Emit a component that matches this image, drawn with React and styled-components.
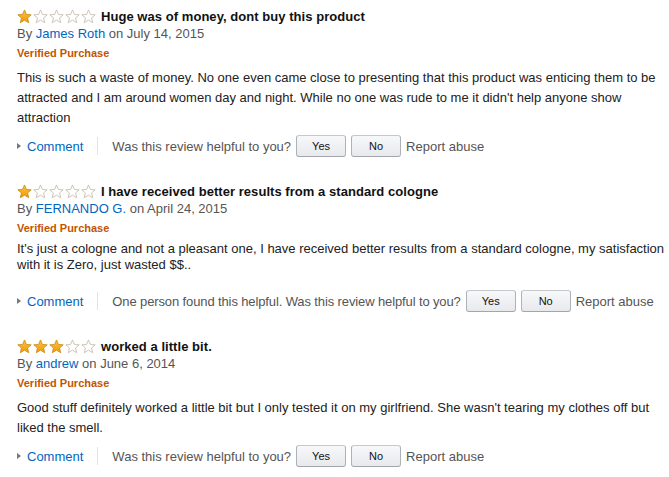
import React from "react";
import styled, { createGlobalStyle } from "styled-components";

const Global = createGlobalStyle`
  html, body { margin: 0; padding: 0; background: #fff; }
  body { font-family: "Liberation Sans", Arial, sans-serif; color: #111; }
`;

const Page = styled.div`
  padding: 0 0 0 17px;
  width: 652px;
`;

const Review = styled.section`
  padding-top: ${(p) => (p.$first ? "7px" : "25px")};
`;

const TitleRow = styled.div`
  display: flex;
  align-items: center;
  gap: 5px;
  height: 18px;
`;

const Stars = styled.span`
  display: inline-flex;
  gap: 1px;
`;

const Title = styled.span`
  font-weight: bold;
  font-size: 13px;
  color: #111;
  letter-spacing: 0.05px;
`;

const Byline = styled.div`
  font-size: 13px;
  line-height: 18px;
  color: #555;
`;

const Link = styled.a`
  color: #0066c0;
  text-decoration: none;
`;

const Verified = styled.div`
  font-size: 11px;
  font-weight: bold;
  line-height: 20px;
  color: #c45500;
`;

const Body = styled.p`
  margin: ${(p) => (p.$tight ? "3px 0 0" : "5px 0 0")};
  font-size: 13px;
  line-height: ${(p) => (p.$tight ? "16px" : "20px")};
  color: #222;
`;

const Actions = styled.div`
  display: flex;
  align-items: center;
  height: 22px;
  margin-top: ${(p) => (p.$tight ? "17px" : "7px")};
  font-size: 13px;
`;

const Arrow = styled.span`
  display: inline-block;
  width: 0;
  height: 0;
  border-top: 3px solid transparent;
  border-bottom: 3px solid transparent;
  border-left: 4px solid #777;
  margin-right: 6px;
`;

const Divider = styled.span`
  width: 1px;
  height: 18px;
  background: #e3e3e3;
  margin: 0 14px 0 14px;
`;

const Helpful = styled.span`
  color: #555;
  margin-right: 5px;
  letter-spacing: ${(p) => (p.$tight ? "-0.12px" : "0")};
`;

const VoteButton = styled.button`
  width: 50px;
  height: 22px;
  margin-right: 5px;
  padding: 0;
  border: 1px solid #adb1b8;
  border-color: #c6c8cc #adb1b8 #a2a6ac;
  border-radius: 3px;
  background: linear-gradient(to bottom, #f7f8fa, #e7e9ec);
  font-family: inherit;
  font-size: 11px;
  color: #111;
`;

const Report = styled.span`
  color: #555;
`;

function Star({ filled }) {
  return (
    <svg width="15" height="15" viewBox="0 0 24 24">
      <defs>
        <linearGradient id="sg" x1="0" y1="0" x2="0" y2="1">
          <stop offset="0" stopColor="#fcc43c" />
          <stop offset="1" stopColor="#f09a0a" />
        </linearGradient>
      </defs>
      <path
        d="M12 1.5l3.1 7.2 7.6.6-5.8 5 1.8 7.6L12 17.8l-6.7 4.1 1.8-7.6-5.8-5 7.6-.6z"
        fill={filled ? "url(#sg)" : "#fff"}
        stroke={filled ? "#c98a10" : "#c2b8a8"}
        strokeWidth="1.3"
        strokeLinejoin="round"
      />
    </svg>
  );
}

const reviews = [
  {
    rating: 1,
    title: "Huge was of money, dont buy this product",
    author: "James Roth",
    date: "July 14, 2015",
    text:
      "This is such a waste of money. No one even came close to presenting that this product was enticing them to be attracted and I am around women day and night. While no one was rude to me it didn't help anyone show attraction",
  },
  {
    rating: 1,
    title: "I have received better results from a standard cologne",
    author: "FERNANDO G.",
    date: "April 24, 2015",
    text:
      "It's just a cologne and not a pleasant one, I have received better results from a standard cologne, my satisfaction with it is Zero, just wasted $$..",
    helpful: "One person found this helpful. ",
    tight: true,
  },
  {
    rating: 3,
    title: "worked a little bit.",
    author: "andrew",
    date: "June 6, 2014",
    text:
      "Good stuff definitely worked a little bit but I only tested it on my girlfriend. She wasn't tearing my clothes off but liked the smell.",
  },
];

export default function App() {
  return (
    <>
      <Global />
      <Page>
        {reviews.map((r, i) => (
          <Review key={i} $first={i === 0}>
            <TitleRow>
              <Stars>
                {[1, 2, 3, 4, 5].map((n) => (
                  <Star key={n} filled={n <= r.rating} />
                ))}
              </Stars>
              <Title>{r.title}</Title>
            </TitleRow>
            <Byline>
              By <Link href="#">{r.author}</Link> on {r.date}
            </Byline>
            <Verified>Verified Purchase</Verified>
            <Body $tight={r.tight}>{r.text}</Body>
            <Actions $tight={r.tight}>
              <Arrow />
              <Link href="#">Comment</Link>
              <Divider />
              <Helpful $tight={r.tight}>
                {r.helpful || ""}Was this review helpful to you?
              </Helpful>
              <VoteButton>Yes</VoteButton>
              <VoteButton>No</VoteButton>
              <Report>Report abuse</Report>
            </Actions>
          </Review>
        ))}
      </Page>
    </>
  );
}
